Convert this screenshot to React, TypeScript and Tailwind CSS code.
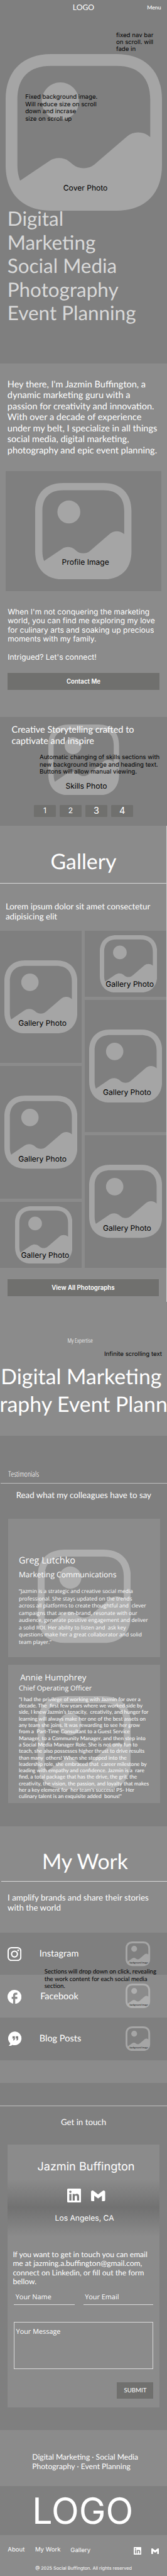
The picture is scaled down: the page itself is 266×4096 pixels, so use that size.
import React from "react";

type IconProps = { className?: string };

const PhotoIcon = ({ className }: IconProps) => (
  <svg viewBox="2 2 20 20" className={className} fill="#ffffff" fillOpacity={0.3} aria-hidden="true">
    <path d="M9 10.381a2.381 2.381 0 1 0 0-4.762 2.381 2.381 0 0 0 0 4.762z" />
    <path
      fillRule="evenodd"
      d="M16.19 2H7.81C4.17 2 2 4.17 2 7.81v8.38c0 1.09.19 2.04.56 2.84.86 1.9 2.7 2.97 5.25 2.97h8.38c3.64 0 5.81-2.17 5.81-5.81V7.81C22 4.17 19.83 2 16.19 2zm4.18 10.5c-.78-.67-2.04-.67-2.82 0l-4.16 3.57c-.78.67-2.04.67-2.82 0l-.34-.28c-.71-.62-1.84-.68-2.64-.14l-3.74 2.51c-.22-.56-.35-1.21-.35-1.97V7.81C3.5 4.99 4.99 3.5 7.81 3.5h8.38c2.82 0 4.31 1.49 4.31 4.31v4.8l-.13-.11z"
    />
  </svg>
);

const InstagramIcon = ({ className }: IconProps) => (
  <svg viewBox="0 0 22 22" className={className} fill="none" stroke="#ffffff" aria-hidden="true">
    <rect x="1" y="1" width="20" height="20" rx="5.2" strokeWidth="2" />
    <circle cx="11" cy="11" r="4.6" strokeWidth="2.1" />
    <circle cx="16.8" cy="5.1" r="1.3" fill="#ffffff" stroke="none" />
  </svg>
);

const FacebookIcon = ({ className }: IconProps) => (
  <svg viewBox="2 2 20 20" className={className} fill="#ffffff" aria-hidden="true">
    <path d="M22 12c0-5.52-4.48-10-10-10S2 6.48 2 12c0 4.84 3.44 8.87 8 9.8V15H8v-3h2V9.5C10 7.57 11.57 6 13.5 6H16v3h-2c-.55 0-1 .45-1 1v2h3v3h-3v6.95c5.05-.5 9-4.76 9-9.95z" />
  </svg>
);

const QuoteBubbleIcon = ({ className }: IconProps) => (
  <svg viewBox="0 0 22 23.5" className={className} fill="#ffffff" aria-hidden="true">
    <path
      fillRule="evenodd"
      d="M11 .2a10.9 10.9 0 1 1-4.2 21.2c-1.6 1.2-3.4 1.9-5.1 1.9-.6 0-.8-.6-.3-1 .9-.8 1.7-2 1.9-3.4A10.9 10.9 0 0 1 11 .2zM6.9 7.8v3.8H9c0 .9-.4 1.3-1.1 1.5v1.4c1.9-.1 2.8-1.3 2.8-3.1V7.800zM12.200 7.800v3.800h2.100c0 .9-.4 1.300-1.100 1.500v1.400c1.900-.1 2.800-1.300 2.800-3.100V7.800z"
    />
  </svg>
);

const LinkedinIcon = ({ className }: IconProps) => (
  <svg viewBox="0 32 448 448" className={className} fill="#ffffff" aria-hidden="true">
    <path d="M416 32H31.9C14.3 32 0 46.5 0 64.3v383.4C0 465.5 14.3 480 31.9 480H416c17.6 0 32-14.5 32-32.3V64.3c0-17.800-14.400-32.300-32-32.300zM135.400 416H69V202.200h66.500V416zm-33.200-243c-21.300 0-38.500-17.300-38.500-38.500S80.900 96 102.200 96c21.200 0 38.500 17.300 38.500 38.500 0 21.300-17.200 38.500-38.500 38.500zm282.100 243h-66.400V312c0-24.800-.5-56.700-34.500-56.700-34.600 0-39.900 27-39.900 54.900V416h-66.400V202.200h63.700v29.200h.9c8.900-16.800 30.600-34.500 62.900-34.500 67.200 0 79.700 44.300 79.700 101.900V416z" />
  </svg>
);

const GmailIcon = ({ className }: IconProps) => (
  <svg viewBox="0 3 24 18" className={className} fill="#ffffff" aria-hidden="true">
    <path d="M24 5.457v13.909c0 .904-.732 1.636-1.636 1.636h-3.819V11.73L12 16.64l-6.545-4.91v9.273H1.636A1.636 1.636 0 0 1 0 19.366V5.457c0-2.023 2.309-3.178 3.927-1.964L5.455 4.64 12 9.548l6.545-4.91 1.528-1.145C21.69 2.28 24 3.434 24 5.457z" />
  </svg>
);

type LinesProps = { lines: string[]; className?: string };

const Lines = ({ lines, className }: LinesProps) => (
  <p className={className}>
    {lines.map((line) => (
      <span key={line} className="block whitespace-pre">
        {line}
      </span>
    ))}
  </p>
);

const Hero = () => (
  <section className="relative h-[578.3px] bg-[#7f7f7f]">
    <header className="grid h-[85.600px] grid-cols-[1fr_auto_1fr] items-start font-['Lato',sans-serif]">
      <span />
      <span className="mt-[4.500px] text-[12.200px] leading-[14.520px]">LOGO</span>
      <span className="mt-[6.100px] mr-[9.500px] justify-self-end text-[8.700px] leading-[11px] font-medium">Menu</span>
    </header>
    <Lines
      className="absolute top-[50.500px] left-[185px] font-['Inter',sans-serif] text-[9.670px] leading-[11.490px] text-black"
      lines={["fixed nav bar", "on scroll. will", "fade in"]}
    />
    <figure className="relative ml-[8.500px] size-[249px]">
      <PhotoIcon className="size-full" />
      <Lines
        className="absolute top-[63.700px] left-[31.700px] font-['Inter',sans-serif] text-[9.670px] leading-[11.490px] text-black"
        lines={["Fixed background image.", "Will reduce size on scroll", "down and incrase", "size on scroll up"]}
      />
      <figcaption className="absolute top-[206.300px] left-[92.300px] font-['Inter',sans-serif] text-[12.090px] leading-[14.520px] whitespace-nowrap text-black">
        Cover Photo
      </figcaption>
    </figure>
    <h1 className="relative -mt-[5.500px] ml-[11.800px] font-['Lato',sans-serif] text-[31.430px] leading-[37.500px] whitespace-nowrap text-[#d9d9d9]">
      Digital
      <br />
      Marketing
      <br />
      Social Media
      <br />
      Photography
      <br />
      Event Planning
    </h1>
  </section>
);

const About = () => (
  <section className="h-[561.300px] pt-[24.400px]">
    <Lines
      className="ml-[11.800px] font-['Lato',sans-serif] text-[14.510px] leading-[17.540px]"
      lines={[
        "Hey there, I'm Jazmin Buffington, a",
        "dynamic marketing guru with a",
        "passion for creativity and innovation.",
        "With over a decade of experience",
        "under my belt, I specialize in all things",
        "social media, digital marketing,",
        "photography and epic event planning.",
      ]}
    />
    <figure className="relative mt-[23.300px] ml-[9.100px] flex h-[190.900px] w-[247.800px] items-center justify-center bg-[#7f7f7f]">
      <PhotoIcon className="size-[153.400px]" />
      <figcaption className="absolute top-[137.900px] left-[89.500px] font-['Inter',sans-serif] text-[12.090px] leading-[14.520px] whitespace-nowrap text-black">
        Profile Image
      </figcaption>
    </figure>
    <div className="mt-[25.800px] ml-[12.200px] font-['Inter',sans-serif] text-[12.090px] leading-[14.580px]">
      <Lines
        lines={[
          "When I'm not conquering the marketing",
          "world, you can find me exploring my love",
          "for culinary arts and soaking up precious",
          "moments with my family.",
        ]}
      />
      <p className="mt-[14.580px]">Intrigued? Let's connect!</p>
    </div>
    <button className="mx-[12.100px] mt-[17.500px] flex h-[26.700px] w-[241.800px] items-center justify-center bg-[#70706e] font-['Inter',sans-serif] text-[9.700px] leading-[11.490px] font-semibold">
      Contact Me
    </button>
  </section>
);

const Skills = () => (
  <section className="relative h-[173.900px] bg-[#7f7f7f] pt-[12.500px]">
    <PhotoIcon className="absolute top-[12.300px] left-[77.400px] size-[112.600px]" />
    <Lines
      className="relative ml-[18.500px] font-['Lato',sans-serif] text-[14.510px] leading-[17.540px]"
      lines={["Creative Storytelling crafted to", "captivate and inspire"]}
    />
    <Lines
      className="absolute top-[59.500px] left-[63px] font-['Inter',sans-serif] text-[9.670px] leading-[11.490px] text-black"
      lines={[
        "Automatic changing of skills sections with",
        "new background image and heading text.",
        "Buttons will allow manual viewing.",
      ]}
    />
    <p className="absolute top-[103.600px] left-[104.400px] font-['Inter',sans-serif] text-[12.090px] leading-[14.520px] whitespace-nowrap text-black">
      Skills Photo
    </p>
    <nav className="mt-[92.500px] ml-[54.400px] flex gap-[6.850px] font-['Inter',sans-serif] text-[12.090px] leading-[14.520px]">
      <button className="h-[19.300px] w-[34.200px] rounded-[1.500px] bg-[#70706e]">1</button>
      <button className="h-[19.300px] w-[34.200px] rounded-[1.500px] bg-[#70706e]">2</button>
      <button className="h-[19.300px] w-[34.200px] rounded-[1.500px] bg-[#70706e] text-[14.510px]">3</button>
      <button className="h-[19.300px] w-[34.200px] rounded-[1.500px] bg-[#70706e] text-[14.510px]">4</button>
    </nav>
  </section>
);

const LargePhoto = () => (
  <figure className="relative flex h-[210.600px] items-center justify-center bg-[#7f7f7f]">
    <PhotoIcon className="size-[116.200px]" />
    <figcaption className="absolute top-[140.400px] left-[29.200px] text-[12.090px] leading-[14.520px] whitespace-nowrap text-black">
      Gallery Photo
    </figcaption>
  </figure>
);

const SmallPhoto = () => (
  <figure className="relative flex h-[105.200px] items-center justify-center bg-[#7f7f7f] pt-[1px] pl-[9.400px]">
    <PhotoIcon className="size-[91.300px]" />
    <figcaption className="absolute top-[78.100px] left-[33.500px] text-[12.090px] leading-[14.520px] whitespace-nowrap text-black">
      Gallery Photo
    </figcaption>
  </figure>
);

const Gallery = () => (
  <section className="h-[756.900px] border-r border-[#d1d1d1] pt-[36.500px]">
    <h2 className="pl-[1px] text-center font-['Lato',sans-serif] text-[33.850px] leading-[40.600px]">Gallery</h2>
    <div className="mt-[13.400px] h-px bg-[#d8d8d8]" />
    <Lines
      className="mt-[29.300px] ml-[8.900px] font-['Lato',sans-serif] text-[13.300px] leading-[15.730px]"
      lines={["Lorem ipsum dolor sit amet consectetur", "adipisicing elit"]}
    />
    <div className="mt-[14px] grid grid-cols-[130px_1fr] gap-x-[4.800px] font-['Inter',sans-serif]">
      <div className="flex flex-col gap-[4.840px]">
        <LargePhoto />
        <LargePhoto />
        <SmallPhoto />
      </div>
      <div className="flex flex-col gap-[4.840px]">
        <SmallPhoto />
        <LargePhoto />
        <LargePhoto />
      </div>
    </div>
    <button className="mt-[18.100px] ml-[11.500px] flex h-[27.200px] w-[241.800px] items-center justify-center bg-[#70706e] font-['Inter',sans-serif] text-[9.700px] leading-[11.490px] font-semibold">
      View All Photographs
    </button>
  </section>
);

const Expertise = () => (
  <section className="relative h-[212.800px] overflow-hidden pt-[54.900px]">
    <h3 className="ml-[107.400px] font-['Open_Sans',sans-serif] text-[9.700px] leading-[13px] font-light [font-stretch:75%]">
      My Expertise
    </h3>
    <p className="absolute top-[77.900px] left-[166px] font-['Inter',sans-serif] text-[9.670px] leading-[11.490px] whitespace-nowrap text-black">
      Infinite scrolling text
    </p>
    <div className="mt-[29.600px] font-['Lato',sans-serif] text-[33.850px] leading-[43.800px] whitespace-nowrap">
      <p className="pl-[1.300px]">Digital Marketing</p>
      <p className="-ml-[0.500px]">raphy Event Plann</p>
    </div>
  </section>
);

const Testimonials = () => (
  <section className="h-[620.500px] bg-[#7f7f7f] pt-[52.100px]">
    <h3 className="ml-[13.200px] font-['Open_Sans',sans-serif] text-[12.090px] leading-[17px] font-light [font-stretch:75%]">
      Testimonials
    </h3>
    <div className="mt-[5.300px] ml-[1.200px] h-px bg-[#bfbfbf]" />
    <p className="mt-[11.700px] ml-[25.700px] font-['Lato',sans-serif] text-[13.300px] leading-[15.730px] whitespace-nowrap">
      Read what my colleagues have to say
    </p>
    <article className="relative mt-[29.200px] ml-[13.300px] h-[219.900px] w-[241.800px] bg-[#8b8b8b] pt-[56.300px] pl-[16.700px] font-['Open_Sans',sans-serif]">
      <PhotoIcon className="absolute top-[49.300px] left-[46.700px] size-[148.300px]" />
      <div className="relative">
        <h4 className="text-[14.510px] leading-[20px]">Greg Lutchko</h4>
        <h5 className="mt-[3.800px] text-[12.090px] leading-[17px]">Marketing Communications</h5>
        <Lines
          className="mt-[13.200px] text-[8.460px] leading-[11.480px]"
          lines={[
            "“Jazmin is a strategic and creative social media",
            "professional. She stays updated on the trends",
            "across all platforms to create thoughtful and  clever",
            "campaigns that are on-brand, resonate with our",
            "audience, generate positive engagement and deliver",
            "a solid ROI. Her ability to listen and  ask key",
            "questions make her a great collaborator and solid",
            "team player.”",
          ]}
        />
      </div>
    </article>
    <article className="relative mt-[12.200px] ml-[13.300px] h-[220.100px] w-[241.800px] bg-[#8b8b8b] pt-[10.500px] pl-[16.700px] font-['Open_Sans',sans-serif]">
      <PhotoIcon className="absolute top-[49.600px] left-[46.700px] size-[148.300px]" />
      <div className="relative">
        <h4 className="ml-[2.200px] text-[13.300px] leading-[18px]">Annie Humphrey</h4>
        <h5 className="mt-[1.300px] text-[10.820px] leading-[15px]">Chief Operating Officer</h5>
        <Lines
          className="mt-[4.800px] font-['Lato',sans-serif] text-[8.460px] leading-[10.290px]"
          lines={[
            "\"I had the privilege of working with Jazmin for over a",
            "decade. The  first few years where we worked side by",
            "side, I knew Jazmin’s tenacity,  creativity, and hunger for",
            "learning will always make her one of the best assets on",
            "any team she joins. It was rewarding to see her grow",
            "from a  Part-Time Consultant to a Guest Service",
            "Manager, to a Community Manager, and then step into",
            "a Social Media Manager Role. She is not only fun to",
            "teach, she also possesses higher thrust to drive results",
            "than many  others! When she stepped into the",
            "leadership role, she embraced that  career milestone by",
            "leading with empathy and confidence. Jazmin is a  rare",
            "find, a total package that has the drive, the grit, the",
            "creativity, the vision, the passion, and loyalty that makes",
            "her a key element for  her team's success! PS- Her",
            "culinary talent is an exquisite added  bonus!\"",
          ]}
        />
      </div>
    </article>
  </section>
);

type ChannelProps = { icon: React.ReactNode; name: string; rowClass: string; nameClass: string; thumbClass: string };

const Channel = ({ icon, name, rowClass, nameClass, thumbClass }: ChannelProps) => (
  <li className={rowClass}>
    <span className="w-[50.700px] shrink-0">{icon}</span>
    <span className={nameClass}>{name}</span>
    <figure className={thumbClass}>
      <PhotoIcon className="size-full" />
      <figcaption className="absolute top-[31.600px] left-[6px] text-[3.650px] leading-[4.400px] whitespace-nowrap text-black">
        background image
      </figcaption>
    </figure>
  </li>
);

const Work = () => (
  <>
    <section className="h-[169px] pt-[36.400px]">
      <h2 className="ml-[66.900px] font-['Lato',sans-serif] text-[33.700px] leading-[40.600px] whitespace-nowrap">My Work</h2>
      <div className="mt-[10.300px] ml-[2.400px] h-px bg-[#d8d8d8]" />
      <Lines
        className="mt-[18.200px] ml-[12px] font-['Lato',sans-serif] text-[13.300px] leading-[15.730px]"
        lines={["I amplify brands and share their stories", "with the world"]}
      />
    </section>
    <div className="relative font-['Lato',sans-serif]">
      <ul>
        <Channel
          icon={<InstagramIcon className="mt-[23.400px] size-[22.200px]" />}
          name="Instagram"
          rowClass="flex h-[67.650px] items-start bg-[#7f7f7f] pl-[12.100px]"
          nameClass="mt-[25.600px] text-[14.510px] leading-[17.540px]"
          thumbClass="relative mt-[14.800px] mr-[26.400px] ml-auto size-[39.200px]"
        />
        <Channel
          icon={<FacebookIcon className="mt-[23.600px] size-[22.200px]" />}
          name="Facebook"
          rowClass="flex h-[67.650px] items-start bg-[#8b8b8b] pl-[12.100px]"
          nameClass="mt-[25.900px] ml-[1.400px] text-[14.510px] leading-[17.540px]"
          thumbClass="relative mt-[13.600px] mr-[26.400px] ml-auto size-[39.200px]"
        />
        <Channel
          icon={<QuoteBubbleIcon className="mt-[21.900px] ml-[1.400px] h-[23.500px] w-[22px]" />}
          name="Blog Posts"
          rowClass="flex h-[67.650px] items-start bg-[#7f7f7f] pl-[12.100px]"
          nameClass="mt-[25.100px] text-[14.510px] leading-[17.540px]"
          thumbClass="relative mt-[14.100px] mr-[26.400px] ml-auto size-[39.200px]"
        />
      </ul>
      <Lines
        className="absolute top-[57.600px] left-[70.700px] text-[9.670px] leading-[11.490px] text-black"
        lines={["Sections will drop down on click, revealing", "the work content for each social media", "section."]}
      />
    </div>
    <div className="h-[36.200px]" />
  </>
);

const Contact = () => (
  <section className="h-[552.400px] bg-[#7f7f7f] pt-[36.300px]">
    <div className="h-px bg-[#c2c2c2]" />
    <h3 className="mt-[17.800px] text-center font-['Lato',sans-serif] text-[13.300px] leading-[15.730px]">Get in touch</h3>
    <div className="mx-[12.100px] mt-[27.300px] h-[417.800px] bg-[#8b8b8b] pt-[23.900px]">
      <h4 className="ml-[47.300px] font-['Inter',sans-serif] text-[18.100px] leading-[22px] whitespace-nowrap">Jazmin Buffington</h4>
      <div className="mt-[9.200px] h-[91.400px] bg-linear-to-b from-[#8b8b8b] via-[#717171] to-[#8b8b8b] pt-[15px]">
        <div className="ml-[94.900px] flex h-[22.200px] items-center gap-[16px]">
          <LinkedinIcon className="size-[22.200px]" />
          <GmailIcon className="h-[16.900px] w-[22.500px]" />
        </div>
        <p className="mt-[17.900px] ml-[75.500px] font-['Inter',sans-serif] text-[12.090px] leading-[14.520px] whitespace-nowrap">
          Los Angeles, CA
        </p>
      </div>
      <div className="ml-[9.700px] w-[222.400px]">
        <Lines
          className="-ml-[1.400px] pt-[21.300px] font-['Lato',sans-serif] text-[12.090px] leading-[14.500px]"
          lines={[
            "If you want to get in touch you can email",
            "me at jazming.a.buffington@gmail.com,",
            "connect on Linkedin, or fill out the form",
            "bellow.",
          ]}
        />
        <div className="mt-[9.600px] flex justify-between font-['Open_Sans',sans-serif] text-[10.880px] leading-[15px]">
          <div className="h-[19.600px] w-[97.300px] border-b border-[#dadada] pl-[3px]">Your Name</div>
          <div className="h-[19.600px] w-[111.200px] border-b border-[#dadada] pl-[2.200px]">Your Email</div>
        </div>
        <div className="mt-[26.900px] h-[75.200px] border border-[#dadada] pt-[6.900px] pl-[2.800px] font-['Open_Sans',sans-serif] text-[10.880px] leading-[15px]">
          Your Message
        </div>
        <button className="mt-[21px] ml-auto flex h-[26.400px] w-[58.600px] items-center justify-center bg-[#70706e] pl-[1px] font-['Lato',sans-serif] text-[9.670px] leading-[11.490px]">
          SUBMIT
        </button>
      </div>
    </div>
  </section>
);

const Footer = () => (
  <footer>
    <Lines
      className="h-[88.900px] pt-[36.100px] pl-[51.300px] font-['Lato',sans-serif] text-[12.150px] leading-[14.500px]"
      lines={["Digital Marketing · Social Media", "Photography · Event Planning"]}
    />
    <div className="h-[78.100px] bg-[#7f7f7f] pt-[4.800px] pl-[51.300px] font-['Inter',sans-serif] text-[57.250px] leading-[69px]">
      LOGO
    </div>
    <div className="h-[64.700px] pt-[18.100px] font-['Inter',sans-serif]">
      <div className="relative flex h-[13px] items-start pr-[12.700px] pl-[12.300px] text-[9.600px] leading-[11.490px]">
        <a className="w-[43.600px]">About</a>
        <a className="w-[56.400px]">My Work</a>
        <a className="pt-[0.700px]">Gallery</a>
        <span className="mt-[1px] ml-auto flex items-center gap-[15.700px]">
          <LinkedinIcon className="size-[12.100px]" />
          <GmailIcon className="h-[9.200px] w-[12.200px]" />
        </span>
      </div>
      <p className="mt-[16.900px] text-center text-[7.260px] leading-[9px]">@ 2025 Social Buffington. All rights reserved</p>
    </div>
  </footer>
);

export default function App() {
  return (
    <main className="h-[4096px] w-[266px] overflow-hidden bg-[#8b8b8b] text-white [text-rendering:geometricPrecision]">
      <Hero />
      <About />
      <Skills />
      <Gallery />
      <Expertise />
      <Testimonials />
      <Work />
      <Contact />
      <Footer />
    </main>
  );
}
